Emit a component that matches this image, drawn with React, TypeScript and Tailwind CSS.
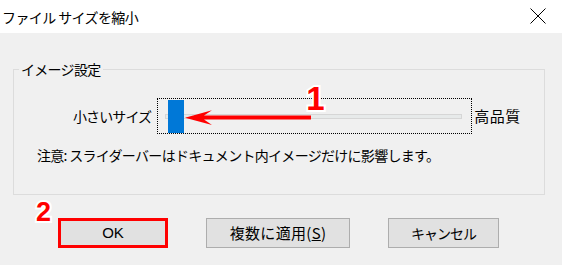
export default function App() {
  const jp = "font-['Noto_Sans_CJK_JP','Noto_Sans',sans-serif]"
  return (
    <div className={`w-[562px] h-[265px] bg-[#f0f0f0] text-black overflow-hidden ${jp}`}>
      {/* Title bar */}
      <div className="h-[33px] bg-white flex items-center justify-between pl-[2px] pr-[16px]">
        <span className="text-[14px] leading-[20px] tracking-[-0.6px]">ファイル サイズを縮小</span>
        <svg width="16" height="16" viewBox="0 0 16 16" className="-mt-[1px]">
          <path d="M0.5 0.5 L15.5 15.5 M15.5 0.5 L0.5 15.5" stroke="#000" strokeWidth="1" fill="none" />
        </svg>
      </div>

      {/* Group box */}
      <div className="relative mt-[36px] ml-[13px] w-[532px] h-[126px] border border-[#dcdcdc]">
        <span className="absolute -top-[11px] left-[5px] px-[2px] bg-[#f0f0f0] text-[14px] leading-[20px] tracking-[-0.7px]">
          イメージ設定
        </span>

        <div className="flex items-center mt-[28px] pl-[59px]">
          <span className="text-[14px] leading-[20px] tracking-[-0.9px]">小さいサイズ</span>
          <div className="relative ml-[6px] w-[315px] h-[36px] border border-dotted border-black flex items-center">
            <div className="ml-[7px] w-[297px] h-[5px] bg-[#e7eaea] border border-[#d6d6d6]" />
            <div className="absolute left-[10px] top-[1px] w-[16px] h-[33px] bg-[#0078d7]" />
            <svg className="absolute left-0 top-0 overflow-visible" width="160" height="36" viewBox="0 0 160 36">
              <polygon points="27,18.7 54,11.3 46,16.4 153,16.4 153,20.4 46,20.4 54,26" fill="#ff0000" />
            </svg>
            <span className="absolute left-[148px] -top-[20px] text-[33px] leading-[40px] font-bold text-[#ff0000] font-['Liberation_Sans',sans-serif] [-webkit-text-stroke:4px_white] [paint-order:stroke_fill]">
              1
            </span>
          </div>
          <span className="ml-[2px] text-[15px] leading-[20px] tracking-[0.5px]">高品質</span>
        </div>

        <div className="mt-[11px] pl-[23px] text-[14px] leading-[20px] tracking-[-0.7px]">
          注意: スライダーバーはドキュメント内イメージだけに影響します。
        </div>
      </div>

      {/* Buttons */}
      <div className="flex mt-[23px] pl-[58px] gap-[38px]">
        <div className="relative">
          <button className="w-[110px] h-[30px] bg-[#e1e1e1] border-[3px] border-[#ff0000] text-[15px] leading-[20px] font-['Liberation_Sans',sans-serif]">
            OK
          </button>
          <span className="absolute -left-[22px] -top-[22px] text-[27px] leading-[32px] font-bold text-[#ff0000] font-['Liberation_Sans',sans-serif] [-webkit-text-stroke:4px_white] [paint-order:stroke_fill]">
            2
          </span>
        </div>
        <button className="w-[144px] h-[30px] bg-[#e1e1e1] border border-[#adadad] text-[15px] leading-[20px] tracking-[0.3px]">
          複数に適用(<span className="underline">S</span>)
        </button>
        <button className="w-[111px] h-[30px] bg-[#e1e1e1] border border-[#adadad] text-[14px] leading-[20px] tracking-[-1px]">
          キャンセル
        </button>
      </div>
    </div>
  )
}
